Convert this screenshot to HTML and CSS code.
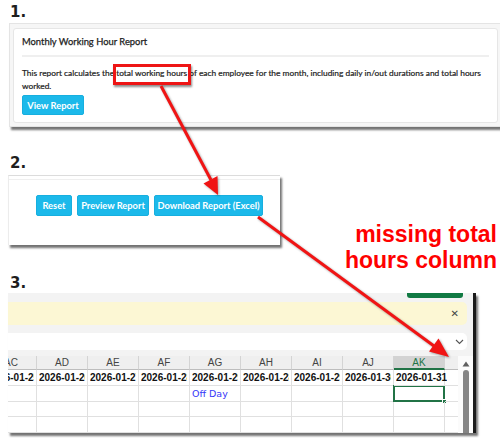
FILE: index.html
```html
<!DOCTYPE html>
<html lang="en">
<head>
<meta charset="utf-8">
<title>Missing total hours column</title>
<link rel="stylesheet" href="styles.css">
</head>
<body>
<main class="page">
  <section class="step step1">
    <h2 class="num">1.</h2>
    <div class="shot shot1">
      <div class="card">
        <h3 class="card-title">Monthly Working Hour Report</h3>
        <div class="rule"></div>
        <p class="desc">This report calculates the total working hours of each employee for the month, including daily in/out durations and total hours worked.</p>
        <button class="btn">View Report</button>
      </div>
    </div>
  </section>

  <section class="step step2">
    <h2 class="num">2.</h2>
    <div class="shot shot2">
      <div class="btn-row">
        <button class="btn">Reset</button>
        <button class="btn">Preview Report</button>
        <button class="btn">Download Report (Excel)</button>
      </div>
    </div>
  </section>

  <section class="step step3">
    <h2 class="num">3.</h2>
    <div class="shot shot3">
      <div class="xl-main">
        <div class="xl-top"><span class="xl-tab"></span></div>
        <div class="xl-msg"><span class="xl-close">✕</span></div>
        <div class="xl-formula">
          <svg class="xl-chev" width="9" height="6" viewBox="0 0 9 6"><path d="M1 1l3.5 3.5L8 1" fill="none" stroke="#555" stroke-width="1.1"/></svg>
        </div>
        <div class="xl-body">
          <div class="xl-clip">
            <div class="xl-grid">
              <div class="hd">AC</div><div class="hd">AD</div><div class="hd">AE</div><div class="hd">AF</div><div class="hd">AG</div><div class="hd">AH</div><div class="hd">AI</div><div class="hd">AJ</div><div class="hd hd-sel">AK</div><div class="hd">AL</div>

              <div class="c dt"><span>2026-01-25</span></div><div class="c dt"><span>2026-01-26</span></div><div class="c dt"><span>2026-01-27</span></div><div class="c dt"><span>2026-01-28</span></div><div class="c dt"><span>2026-01-29</span></div><div class="c dt"><span>2026-01-28</span></div><div class="c dt"><span>2026-01-29</span></div><div class="c dt"><span>2026-01-30</span></div><div class="c dt dt-last"><span>2026-01-31</span></div><div class="c"></div>

              <div class="c"></div><div class="c"></div><div class="c"></div><div class="c"></div><div class="c off">Off Day</div><div class="c"></div><div class="c"></div><div class="c"></div><div class="c sel"><span class="handle"></span></div><div class="c"></div>

              <div class="c"></div><div class="c"></div><div class="c"></div><div class="c"></div><div class="c"></div><div class="c"></div><div class="c"></div><div class="c"></div><div class="c"></div><div class="c"></div>

              <div class="c"></div><div class="c"></div><div class="c"></div><div class="c"></div><div class="c"></div><div class="c"></div><div class="c"></div><div class="c"></div><div class="c"></div><div class="c"></div>
            </div>
          </div>
          <div class="xl-scroll">
            <svg class="xl-up" width="8" height="6" viewBox="0 0 8 6"><path d="M4 0.5L7.5 5.5H0.5z" fill="#5f5f5f"/></svg>
            <span class="xl-thumb"></span>
          </div>
        </div>
      </div>
    </div>
  </section>
</main>

<div class="hilite"></div>

<svg class="arrows" width="500" height="438" viewBox="0 0 500 438">
  <line x1="161" y1="86" x2="211" y2="180" stroke="#f01414" stroke-width="3"/>
  <polygon points="218,195 203.5,183.5 217.5,176" fill="#f01414"/>
  <line x1="258" y1="217" x2="434" y2="346" stroke="#f01414" stroke-width="3"/>
  <polygon points="449,357 429,351.5 438.5,338.5" fill="#f01414"/>
</svg>

<p class="note">missing total<br>hours column</p>
</body>
</html>
```

FILE: styles.css
```css
* { box-sizing: border-box; }

html, body {
  margin: 0;
  padding: 0;
}

body {
  width: 500px;
  height: 438px;
  overflow: hidden;
  position: relative;
  background: #ffffff;
  font-family: Lato, "Open Sans", sans-serif;
  color: #333;
}

.page {
  display: flex;
  flex-direction: column;
}

.num {
  margin: 0;
  padding-left: 10px;
  font: bold 15px/20px "DejaVu Sans", Verdana, sans-serif;
  color: #1e1e1e;
}

.step1 { padding-top: 2px; }
.step1 .shot { margin-top: 1px; }
.step2 { margin-top: 26px; }
.step2 .shot { margin-top: 2px; }
.step3 { margin-top: 28px; }

.shot {
  margin-left: 8px;
  box-shadow: 2px 3px 2px rgba(0, 0, 0, 0.55);
}

/* ---- panel 1 ---- */
.shot1 {
  width: 500px;
  margin-left: 9px;
  background: #f6f6f6;
  border: 1px solid #e4e4e4;
  padding: 4px 0 3px 3px;
}

.card {
  background: #fff;
  border: 1px solid #e6e6e6;
  border-radius: 3px;
  width: 485px;
  height: 95px;
  padding: 0 8px;
  display: flex;
  flex-direction: column;
  align-items: flex-start;
}

.card-title {
  margin: 6px 0 0;
  font-size: 9.4px;
  line-height: 14px;
  font-weight: 400;
  color: #222;
  -webkit-text-stroke: 0.25px #222;
}

.rule {
  align-self: stretch;
  height: 2px;
  background: #efefef;
  margin-top: 6px;
}

.desc {
  margin: 10px 0 0;
  font-size: 8.35px;
  line-height: 13px;
  color: #222;
  -webkit-text-stroke: 0.2px #222;
}

.btn {
  font-family: Lato, "Open Sans", sans-serif;
  font-weight: 700;
  font-size: 9.3px;
  color: #fff;
  background: #1cb9ea;
  border: 1px solid #17afdf;
  border-radius: 2px;
  height: 21px;
  padding: 0 7px;
  margin: 0;
}

.card .btn {
  margin-top: 2px;
  height: 20px;
  width: 62px;
  padding: 0;
}

/* ---- panel 2 ---- */
.shot2 {
  width: 272px;
  height: 70px;
  background: #fff;
  border-top: 1px solid #dcdcdc;
  border-left: 1px solid #ececec;
  padding: 19px 0 0 27px;
  position: relative;
}

.shot2::before {
  content: "";
  position: absolute;
  left: 0;
  right: 0;
  top: 3px;
  height: 1px;
  background: #efefef;
}

.btn-row {
  display: flex;
  gap: 5px;
}

.btn-row .btn:nth-child(1) { width: 36px; padding: 0; }
.btn-row .btn:nth-child(2) { width: 72px; padding: 0; }
.btn-row .btn:nth-child(3) { width: 109px; padding: 0; }

/* ---- panel 3 (excel) ---- */
.shot3 {
  width: 468px;
  height: 140px;
  background: #f3f3f3;
  border-right: 3px solid #1a1a1a;
  display: flex;
  font-family: "DejaVu Sans", Verdana, sans-serif;
}

.xl-main {
  flex: 1;
  display: flex;
  flex-direction: column;
  min-width: 0;
}

.xl-top {
  height: 9px;
  display: flex;
  justify-content: flex-end;
  padding-right: 10px;
}

.xl-tab {
  width: 56px;
  height: 5px;
  background: #117a43;
  border-radius: 0 0 3px 3px;
}

.xl-msg {
  height: 23px;
  margin-right: 6px;
  background: #fcf7d4;
  border-radius: 0 5px 5px 0;
  display: flex;
  align-items: center;
  justify-content: flex-end;
  padding-right: 8px;
}

.xl-close {
  font-family: "DejaVu Sans", sans-serif;
  font-size: 10px;
  color: #444;
}

.xl-formula {
  height: 17px;
  margin: 8px 6px 0 0;
  background: #fff;
  border-radius: 0 5px 5px 0;
  display: flex;
  align-items: center;
  justify-content: flex-end;
  padding-right: 3px;
}

.xl-body {
  margin-top: 6px;
  flex: 1;
  display: flex;
  min-height: 0;
}

.xl-clip {
  width: 450px;
  overflow: hidden;
  background: #fff;
}

.xl-grid {
  margin-left: -22px;
  display: grid;
  grid-template-columns: repeat(10, 51px);
  grid-template-rows: 14px 16px 16px 15px 16px;
}

.hd {
  background: #efefef;
  border-right: 1px solid #d4d4d4;
  border-bottom: 1px solid #bdbdbd;
  font: 10px/14px "Liberation Sans", Arial, sans-serif;
  text-align: center;
  color: #444;
}

.hd-sel {
  background: #d3d3d3;
  color: #217346;
  border-bottom: 2px solid #217346;
}

.c {
  border-right: 1px solid #e0e0e0;
  border-bottom: 1px solid #e0e0e0;
  overflow: hidden;
  white-space: nowrap;
  font-size: 9.5px;
  line-height: 15px;
  padding-left: 1px;
  color: #111;
  position: relative;
}

.dt {
  font: bold 10px/15px "Liberation Sans", Arial, sans-serif;
  padding-left: 2px;
}

.dt span {
  display: inline-block;
  max-width: 46px;
  overflow: hidden;
  vertical-align: top;
}

.dt-last {
  overflow: visible;
  z-index: 1;
}

.dt-last span { max-width: none; }

.off {
  color: #3636f8;
  padding-left: 2px;
}

.sel {
  overflow: visible;
  border: 2px solid #217346;
  margin: -1px 0 0 -1px;
  width: 52px;
  height: 17px;
}

.handle {
  position: absolute;
  right: -4px;
  bottom: -4px;
  width: 5px;
  height: 5px;
  background: #217346;
  border: 1px solid #fff;
}

.xl-scroll {
  width: 15px;
  background: #fbfbfb;
  display: flex;
  flex-direction: column;
  align-items: center;
  padding-top: 5px;
  gap: 3px;
}

.xl-thumb {
  width: 6px;
  flex: 1;
  background: #858585;
  border-radius: 3px 3px 0 0;
}

/* ---- annotations (overlays) ---- */
.hilite {
  position: absolute;
  left: 113px;
  top: 64px;
  width: 78px;
  height: 21px;
  border: 3px solid #ee1515;
  box-shadow: 1px 2px 2px rgba(0, 0, 0, 0.45);
}

.arrows {
  position: absolute;
  left: 0;
  top: 0;
  pointer-events: none;
  filter: drop-shadow(1px 1px 1px rgba(0, 0, 0, 0.35));
}

.note {
  position: absolute;
  right: 3px;
  top: 221px;
  margin: 0;
  text-align: right;
  font: bold 23px/26px "Liberation Sans", Arial, sans-serif;
  color: #ff0000;
}
```
